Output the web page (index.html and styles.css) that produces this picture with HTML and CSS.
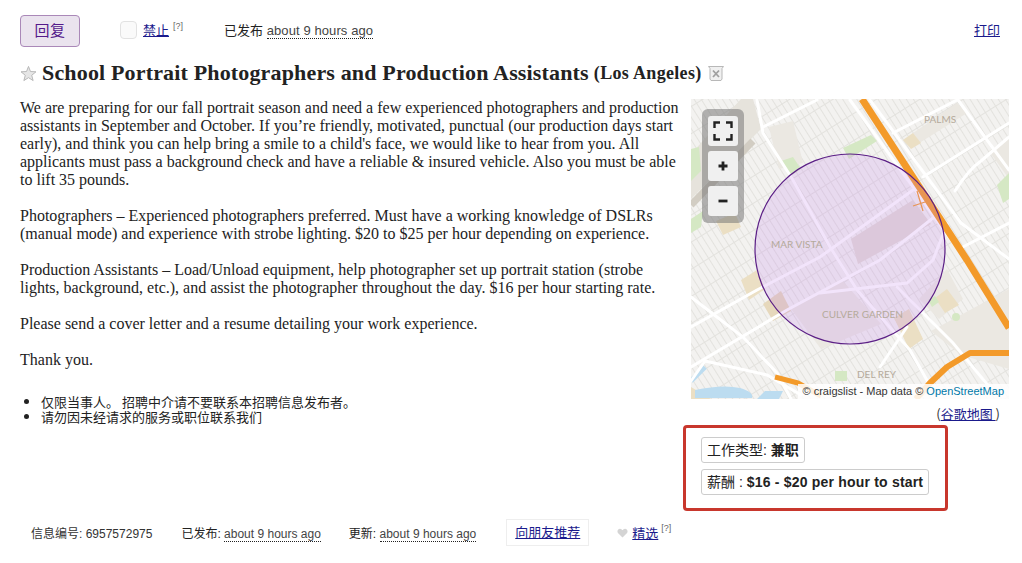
FILE: index.html
```html
<!DOCTYPE html>
<html lang="zh">
<head>
<meta charset="utf-8">
<title>School Portrait Photographers and Production Assistants</title>
<link rel="stylesheet" href="styles.css">
</head>
<body>
<div class="page">
  <header class="topbar">
    <button class="reply"><span class="reply-text">回复</span></button>
    <span class="flag"><span class="flagbox"></span><a href="#" class="link">禁止</a><sup class="help">[?]</sup></span>
    <span class="posted">已发布 <time class="ago">about 9 hours ago</time></span>
    <a href="#" class="link print">打印</a>
  </header>
  <h1 class="title">
    <svg class="star" viewBox="0 0 18 18" width="17" height="17"><path d="M9 1.500l2.100 5.400 5.800.3-4.500 3.700 1.500 5.600L9 13.400l-4.900 3.100 1.500-5.600L1.100 7.200l5.800-.3z" fill="#e6e6e6" stroke="#b5b5b5" stroke-width="1"/></svg>
    <span class="title-text">School Portrait Photographers and Production Assistants</span>
    <small class="area">(Los Angeles)</small>
    <svg class="hide" viewBox="0 0 16 16" width="16" height="16"><path d="M.5 1.500h15l-1.500 2v10.500l-1 1.500H3l-1-1.500V3.500z" fill="#f0f0f0" stroke="#b8b8b8" stroke-width="1"/><path d="M5 5.500l6 6.500M11 5.500l-6 6.500" stroke="#a0a0a0" stroke-width="1.800"/></svg>
  </h1>
  <main class="content">
    <section class="body-col">
      <p class="post">We are preparing for our fall portrait season and need a few experienced photographers and production assistants in September and October. If you’re friendly, motivated, punctual (our production days start early), and think you can help bring a smile to a child's face, we would like to hear from you. All applicants must pass a background check and have a reliable &amp; insured vehicle. Also you must be able to lift 35 pounds.</p>
      <p class="post">Photographers – Experienced photographers preferred. Must have a working knowledge of DSLRs (manual mode) and experience with strobe lighting. $20 to $25 per hour depending on experience.</p>
      <p class="post">Production Assistants – Load/Unload equipment, help photographer set up portrait station (strobe lights, background, etc.), and assist the photographer throughout the day. $16 per hour starting rate.</p>
      <p class="post">Please send a cover letter and a resume detailing your work experience.</p>
      <p class="post">Thank you.</p>
      <ul class="notices">
        <li>仅限当事人。 招聘中介请不要联系本招聘信息发布者。</li>
        <li>请勿因未经请求的服务或职位联系我们</li>
      </ul>
    </section>
    <aside class="side-col">
      <div class="map">
        <svg class="map-art" viewBox="0 0 318 300" width="318" height="300">
          <defs>
            <pattern id="gridA" width="6" height="300" patternUnits="userSpaceOnUse" patternTransform="rotate(-32)"><rect x="2" width="1" height="300" fill="#e3e2de"/></pattern>
            <pattern id="gridB" width="300" height="23" patternUnits="userSpaceOnUse" patternTransform="rotate(-32)"><rect y="6" width="300" height="1" fill="#e3e2de"/></pattern>
          </defs>
          <rect width="318" height="300" fill="#f3f2f0"/>
          <rect width="318" height="300" fill="url(#gridA)"/>
          <rect width="318" height="300" fill="url(#gridB)"/>
          <g fill="#ebe8e2">
            <path d="M78 28L102 22 112 64 88 70z"/>
            <path d="M212 41L266 4 276 14 222 48z"/>
            <path d="M298 52L318 38 318 80 308 66z"/>
            <path d="M240 232L318 190V270L270 256z"/>
            <path d="M228 200L256 170 272 200 248 220z"/>
            <path d="M100 210L150 180 190 225 130 250z"/>
          </g>
          <path d="M160 140L222 101 240 125 167 165z" fill="#e3dcd6"/>
          <path d="M0 100L70 30 62 0 50 0 0 55z" fill="#e6e3dc"/>
          <path d="M0 106L62 42" stroke="#d2cdc3" stroke-width="7" fill="none"/>
          <g fill="#ebdfc4">
            <path d="M50 181L66 171 74 190 58 201z"/>
            <path d="M72 205L90 192 100 212 82 222z" fill="#e6d8bc"/>
            <path d="M203 219L218 210 232 240 218 250z"/>
            <path d="M244 199L256 190 268 206 254 214z"/>
            <path d="M25 122L44 114 50 128 32 136z"/>
            <path d="M212 41L222 34 230 44 220 50z"/>
            <path d="M0 288L20 300H0z"/>
          </g>
          <g fill="#d5e8c4">
            <path d="M152 49L180 36 186 42 158 60z"/>
            <path d="M90 62L102 58 110 70 98 78z"/>
            <path d="M0 50L8 48 10 72 0 82z"/>
            <path d="M0 120L12 112 10 128 0 134z"/>
            <path d="M306 86L318 74V100L312 104z"/>
            <circle cx="265" cy="218" r="4"/>
            <path d="M144 272h12v10h-12z"/>
            <path d="M237 201l7-4 4 6-7 5z"/>
          </g>
          <path d="M4 291q28-6 45-2 14 4 12 10H4z" fill="#bcdcf0"/>
          <path d="M66 300l8-8h18l-4 8z" fill="#bcdcf0"/>
          <path d="M0 282L14 268" stroke="#bcdcf0" stroke-width="5"/>
          <g fill="none" stroke="#fff" stroke-width="3" stroke-linecap="round">
            <path d="M66 1L72 34 102 81 139 148 166 191 219 251 238 285"/>
            <path d="M72 28L126 1"/>
            <path d="M202 34L266 1"/>
            <path d="M232 78L318 24"/>
            <path d="M267 1L318 71"/>
            <path d="M159 1L222 88 255 134 290 180"/>
            <path d="M179 1L270 124"/>
            <path d="M0 228L66 191 129 158 222 91"/>
            <path d="M0 268L96 211 189 161 242 119"/>
            <path d="M129 194L216 184 242 161 256 125"/>
            <path d="M0 198L52 238 86 274 100 300"/>
            <path d="M206 188L262 244 300 290"/>
            <path d="M189 268L216 228"/>
            <path d="M268 150L318 124"/>
            <path d="M270 124L318 160"/>
            <path d="M264 92Q278 70 290 62L318 38"/>
            <path d="M14 262L76 276 110 296"/>
            <path d="M0 282L14 262"/>
          </g>
          <g fill="none" stroke="#f39a2a" stroke-linejoin="round" stroke-linecap="butt">
            <path d="M171 0L276 161 318 229" stroke-width="7"/>
            <path d="M225 300L239 284 256 268 279 254 318 254" stroke-width="6"/>
            <path d="M84 278L107 284 130 297" stroke-width="5"/>
          </g>
          <path d="M222 107l15-5M226 92l6 20" stroke="#f39a2a" stroke-width="1.200"/>
          <circle cx="159" cy="150" r="95" fill="#c382eb" fill-opacity=".22" stroke="#5b1f86" stroke-width="1.200"/>
          <g class="map-label">
            <text x="233" y="24">PALMS</text>
            <text x="80" y="149">MAR VISTA</text>
            <text x="131" y="219">CULVER GARDEN</text>
            <text x="166" y="279">DEL REY</text>
          </g>
        </svg>
        <div class="zoom-ctl">
          <button class="zoom-btn">
            <svg viewBox="0 0 20 20" width="20" height="20"><path d="M1.500 7V1.500H7M13 1.500h5.500V7M18.500 13v5.500H13M7 18.500H1.500V13" fill="none" stroke="#222" stroke-width="2.400"/></svg>
          </button>
          <button class="zoom-btn">
            <svg viewBox="0 0 10 10" width="10" height="10"><path d="M5 .5v9M.5 5h9" stroke="#222" stroke-width="2.800"/></svg>
          </button>
          <button class="zoom-btn">
            <svg viewBox="0 0 10 10" width="10" height="10"><path d="M.5 5h9" stroke="#222" stroke-width="2.800"/></svg>
          </button>
        </div>
        <div class="attrib">© craigslist - Map data © <a href="#" class="osm">OpenStreetMap</a></div>
      </div>
      <div class="maplink">(<a href="#" class="link">谷歌地图 </a>)</div>
      <div class="attrs">
        <span class="attr">工作类型: <b>兼职</b></span>
        <span class="attr">薪酬 : <b class="pay">$16 - $20 per hour to start</b></span>
      </div>
    </aside>
  </main>
  <footer class="foot">
    <span class="foot-id">信息编号: 6957572975</span>
    <span class="foot-posted">已发布: <time class="ago foot-ago">about 9 hours ago</time></span>
    <span class="foot-updated">更新: <time class="ago foot-ago">about 9 hours ago</time></span>
    <a href="#" class="link share">向朋友推荐</a>
    <svg class="heart" viewBox="0 0 12 11" width="11" height="10"><path d="M6 10.500L1 5.500Q-.5 2.500 2 1q2.500-1 4 1.500Q7.500 0 10 1q2.500 1.500 1 4.500z" fill="#d4d4d4"/></svg>
    <a href="#" class="link fav">精选</a><sup class="help">[?]</sup>
  </footer>
</div>
</body>
</html>
```
FILE: styles.css
```css
* { box-sizing: border-box; }
html, body { margin: 0; padding: 0; background: #fff; }
body {
  width: 1022px;
  height: 563px;
  overflow: hidden;
  color: #222;
  font-family: "Liberation Serif", "Noto Sans CJK SC", serif;
}
.page { padding: 15px 13px 0 20px; }
.link { color: #1a1a8c; text-decoration: underline; }
.topbar {
  display: flex;
  align-items: center;
  height: 32px;
  padding-right: 9px;
  font-family: "Liberation Sans", "Noto Sans CJK SC", sans-serif;
  font-size: 13px;
}
.reply {
  width: 60px;
  height: 32px;
  padding: 0 0 3px;
  border: 1px solid #aa88b8;
  border-radius: 4px;
  background: #eae3ee;
  color: #551a8b;
  font-family: "Noto Sans CJK SC", sans-serif;
  font-size: 15px;
}
.reply-text { letter-spacing: .5px; }
.flag { display: flex; align-items: center; margin-left: 40px; padding-bottom: 3px; }
.flagbox {
  width: 17px;
  height: 18px;
  margin-right: 6px;
  border: 1px solid #e2e2e2;
  border-radius: 4px;
  background: #fafafa;
}
.help { margin-left: 4px; color: #666; font-size: 9px; line-height: 1; vertical-align: super; }
.topbar .help { align-self: flex-start; margin-top: 2px; }
.posted { margin-left: 41px; padding-bottom: 3px; }
.ago { border-bottom: 1px dotted #222; color: #444; letter-spacing: .1px; }
.foot-ago { letter-spacing: 0; }
.print { margin-left: auto; padding-bottom: 3px; }
.title {
  display: flex;
  align-items: center;
  height: 30px;
  margin: 11px 0 0;
  font-size: 22px;
  font-weight: bold;
  letter-spacing: .16px;
}
.star { margin-right: 5px; }
.area { margin-left: 5px; font-size: 18px; letter-spacing: .33px; }
.hide { margin-left: 6px; }
.content { display: flex; align-items: flex-start; margin-top: 11px; }
.body-col { flex: none; width: 663px; font-size: 16px; line-height: 18px; }
.post { margin: 0 0 18px; color: #222; }
.notices {
  margin: 25px 0 0;
  padding-left: 21px;
  font-family: "Noto Sans CJK SC", sans-serif;
  font-size: 13px;
  line-height: 15px;
}
.side-col { flex: none; display: flex; flex-direction: column; align-items: flex-start; width: 326px; }
.map { position: relative; width: 318px; height: 300px; margin-left: 8px; overflow: hidden; }
.map-art { display: block; }
.map-label text { fill: #b5aa9b; font-family: "Lato", sans-serif; font-size: 10px; }
.zoom-ctl {
  position: absolute;
  top: 10px;
  left: 11px;
  display: flex;
  flex-direction: column;
  gap: 5px;
  padding: 7px 6px;
  border-radius: 6px;
  background: rgba(120, 120, 120, .55);
}
.zoom-btn {
  display: flex;
  align-items: center;
  justify-content: center;
  width: 30px;
  height: 30px;
  padding: 0;
  border: 0;
  border-radius: 3px;
  background: #f0f0f0;
}
.attrib {
  position: absolute;
  right: 0;
  bottom: 0;
  height: 15px;
  padding: 0 5px;
  background: rgba(255, 255, 255, .85);
  color: #333;
  font-family: "Liberation Sans", sans-serif;
  font-size: 11px;
  line-height: 15px;
}
.osm { color: #0078a8; text-decoration: none; }
.maplink {
  align-self: flex-end;
  margin-top: 7px;
  padding-right: 9px;
  font-family: "Noto Sans CJK SC", sans-serif;
  font-size: 13px;
  line-height: 15px;
  color: #333;
}
.attrs {
  display: flex;
  flex-direction: column;
  align-items: flex-start;
  gap: 6px;
  width: 265px;
  height: 86px;
  margin-top: 4px;
  padding: 9px 15px;
  border: 3px solid #c8372d;
  border-radius: 4px;
}
.attr {
  display: block;
  flex: none;
  height: 26px;
  padding: 0 5px;
  border: 1px solid #ccc;
  border-radius: 3px;
  font-family: "Liberation Sans", "Noto Sans CJK SC", sans-serif;
  font-size: 14px;
  line-height: 24px;
  color: #222;
}
.pay { letter-spacing: .2px; }
.foot {
  display: flex;
  align-items: center;
  height: 27px;
  margin-top: 8px;
  padding-left: 11px;
  font-family: "Liberation Sans", "Noto Sans CJK SC", sans-serif;
  font-size: 12px;
}
.foot-id { color: #333; }
.foot-posted { margin-left: 29px; }
.foot-updated { margin-left: 28px; }
.share {
  display: block;
  height: 27px;
  margin-left: 30px;
  padding: 0 8px;
  border: 1px solid #eee;
  font-size: 13px;
  line-height: 25px;
}
.heart { margin-left: 28px; margin-right: 4px; }
.fav { font-size: 13px; }
.foot .help { align-self: flex-start; margin-top: 5px; margin-left: 3px; }
```
